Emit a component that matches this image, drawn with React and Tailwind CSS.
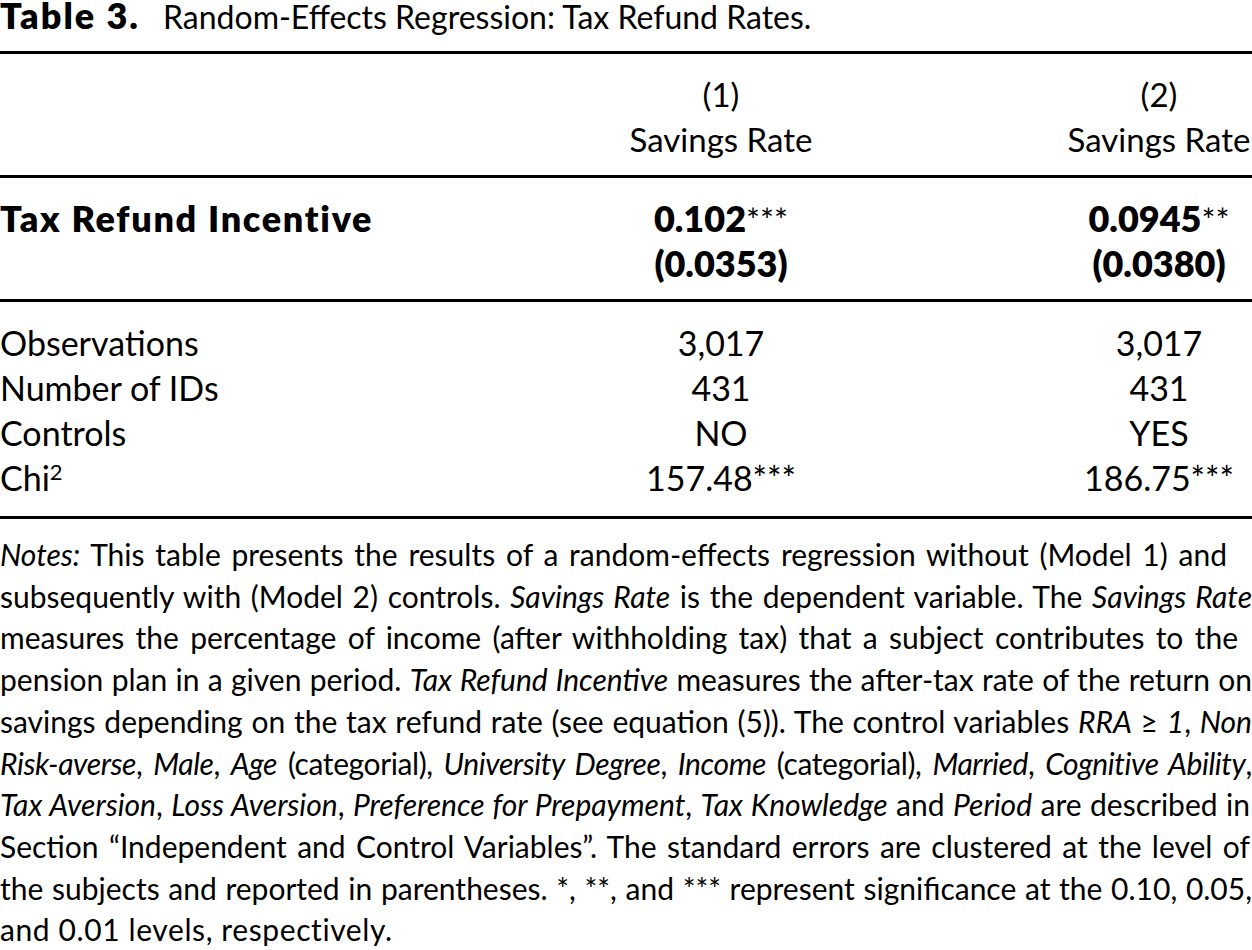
import React from "react";

const Star = ({ children }) => (
  <span className="font-normal text-[33px]">{children}</span>
);

const I = ({ children }) => <span className="italic">{children}</span>;

const Line = ({ w, extra = "", children }) => (
  <div className={`whitespace-nowrap text-justify [text-align-last:justify] ${w} ${extra}`}>
    {children}
  </div>
);

export default function App() {
  return (
    <div className="w-[1252px] h-[950px] overflow-hidden bg-white text-black [font-family:Lato,'Open_Sans',sans-serif]">
      {/* Title */}
      <div className="h-[51px] leading-[31px] whitespace-nowrap">
        <span className="inline-block w-[163px] font-extrabold text-[36px] tracking-[2px]">Table 3.</span>
        <span className="text-[32px]">Random-Effects Regression: Tax Refund Rates.</span>
      </div>
      <div className="h-[3px] bg-black" />

      {/* Header */}
      <div className="h-[121px] pt-[18px] grid grid-cols-[1fr_186px_186px] gap-x-[252px] text-[33px] leading-[45px]">
        <div />
        <div className="text-center whitespace-nowrap">
          <div>(1)</div>
          <div>Savings Rate</div>
        </div>
        <div className="text-center whitespace-nowrap">
          <div>(2)</div>
          <div>Savings Rate</div>
        </div>
      </div>
      <div className="h-[3px] bg-black" />

      {/* Main coefficient */}
      <div className="h-[121px] pt-[18px] grid grid-cols-[1fr_186px_186px] gap-x-[252px] text-[36px] leading-[44px] font-extrabold">
        <div className="whitespace-nowrap tracking-[1.7px]">Tax Refund Incentive</div>
        <div className="text-center whitespace-nowrap">
          <div>
            0.102<Star>***</Star>
          </div>
          <div>(0.0353)</div>
        </div>
        <div className="text-center whitespace-nowrap">
          <div>
            0.0945<Star>**</Star>
          </div>
          <div>(0.0380)</div>
        </div>
      </div>
      <div className="h-[3px] bg-black" />

      {/* Stats */}
      <div className="h-[214px] pt-[18px] grid grid-cols-[1fr_186px_186px] gap-x-[252px] text-[34px] leading-[45px]">
        <div className="whitespace-nowrap">
          <div>Observations</div>
          <div>Number of IDs</div>
          <div>Controls</div>
          <div>
            Chi<sup className="text-[22px]">2</sup>
          </div>
        </div>
        <div className="text-center whitespace-nowrap">
          <div>3,017</div>
          <div>431</div>
          <div>NO</div>
          <div>157.48***</div>
        </div>
        <div className="text-center whitespace-nowrap">
          <div>3,017</div>
          <div>431</div>
          <div>YES</div>
          <div>186.75***</div>
        </div>
      </div>
      <div className="h-[3px] bg-black" />

      {/* Notes */}
      <div className="pt-[15px] text-[30px] leading-[41.7px]">
        <Line w="w-[1227px]">
          <I>Notes:</I> This table presents the results of a random-effects regression without (Model 1) and
        </Line>
        <Line w="w-[1252px]">
          subsequently with (Model 2) controls. <I>Savings Rate</I> is the dependent variable. The <I>Savings Rate</I>
        </Line>
        <Line w="w-[1238px]">
          measures the percentage of income (after withholding tax) that a subject contributes to the
        </Line>
        <Line w="w-[1252px]">
          pension plan in a given period. <I>Tax Refund Incentive</I> measures the after-tax rate of the return on
        </Line>
        <Line w="w-[1252px]">
          savings depending on the tax refund rate (see equation (5)). The control variables <I>RRA</I> ≥ <I>1</I>, <I>Non</I>
        </Line>
        <Line w="w-[1252px]" extra="tracking-[-0.4px]">
          <I>Risk-averse</I>, <I>Male</I>, <I>Age</I> (categorial), <I>University Degree</I>, <I>Income</I> (categorial), <I>Married</I>, <I>Cognitive Ability</I>,
        </Line>
        <Line w="w-[1250px]">
          <I>Tax Aversion</I>, <I>Loss Aversion</I>, <I>Preference for Prepayment</I>, <I>Tax Knowledge</I> and <I>Period</I> are described in
        </Line>
        <Line w="w-[1250px]">
          Section “Independent and Control Variables”. The standard errors are clustered at the level of
        </Line>
        <Line w="w-[1252px]">
          the subjects and reported in parentheses. *, **, and *** represent significance at the 0.10, 0.05,
        </Line>
        <div className="whitespace-nowrap tracking-[0.6px]">and 0.01 levels, respectively.</div>
      </div>
    </div>
  );
}
